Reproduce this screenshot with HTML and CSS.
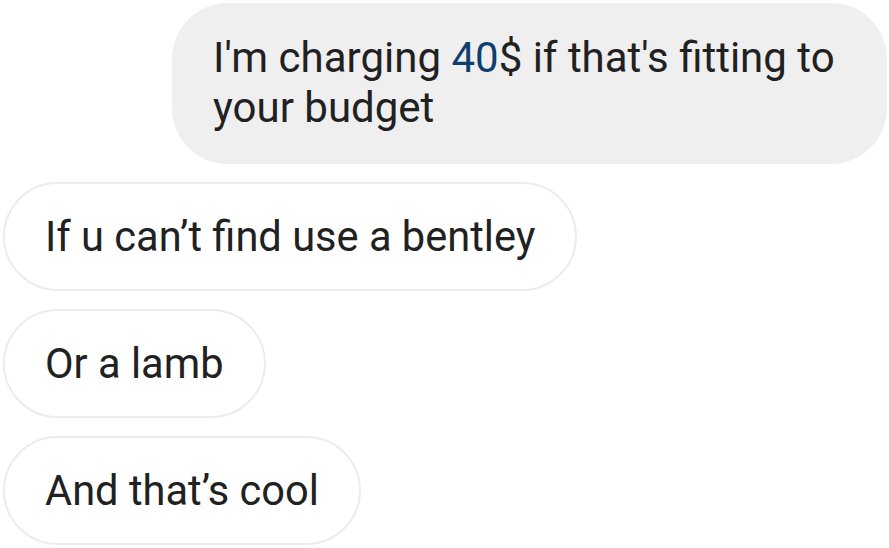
FILE: index.html
```html
<!DOCTYPE html>
<html>
<head>
<meta charset="utf-8">
<link rel="stylesheet" href="styles.css">
</head>
<body>
<div class="thread">
  <div class="bubble sent">I'm charging <span class="num">40</span>$ if that's fitting to your budget</div>
  <div class="bubble recv">If u can’t find use a bentley</div>
  <div class="bubble recv">Or a lamb</div>
  <div class="bubble recv">And that’s cool</div>
</div>
</body>
</html>
```
FILE: styles.css
```css
html, body {
  margin: 0;
  background: #ffffff;
}
body {
  font-family: Roboto, "Noto Sans", sans-serif;
  color: #212121;
}
.thread {
  display: flex;
  flex-direction: column;
  align-items: flex-start;
  gap: 18px;
  padding: 3px 2px 0 3px;
}
.bubble {
  box-sizing: border-box;
}
.sent {
  align-self: flex-end;
  width: 715px;
  background: #efefef;
  border-radius: 56px;
  padding: 30px 41px 31px 41px;
  font-size: 42px;
  line-height: 50px;
}
.num {
  color: #0d3f6e;
}
.recv {
  background: #ffffff;
  border: 2px solid #ececec;
  border-radius: 60px;
  padding: 28px 40px;
  font-size: 41.6px;
  line-height: 49px;
}
```
